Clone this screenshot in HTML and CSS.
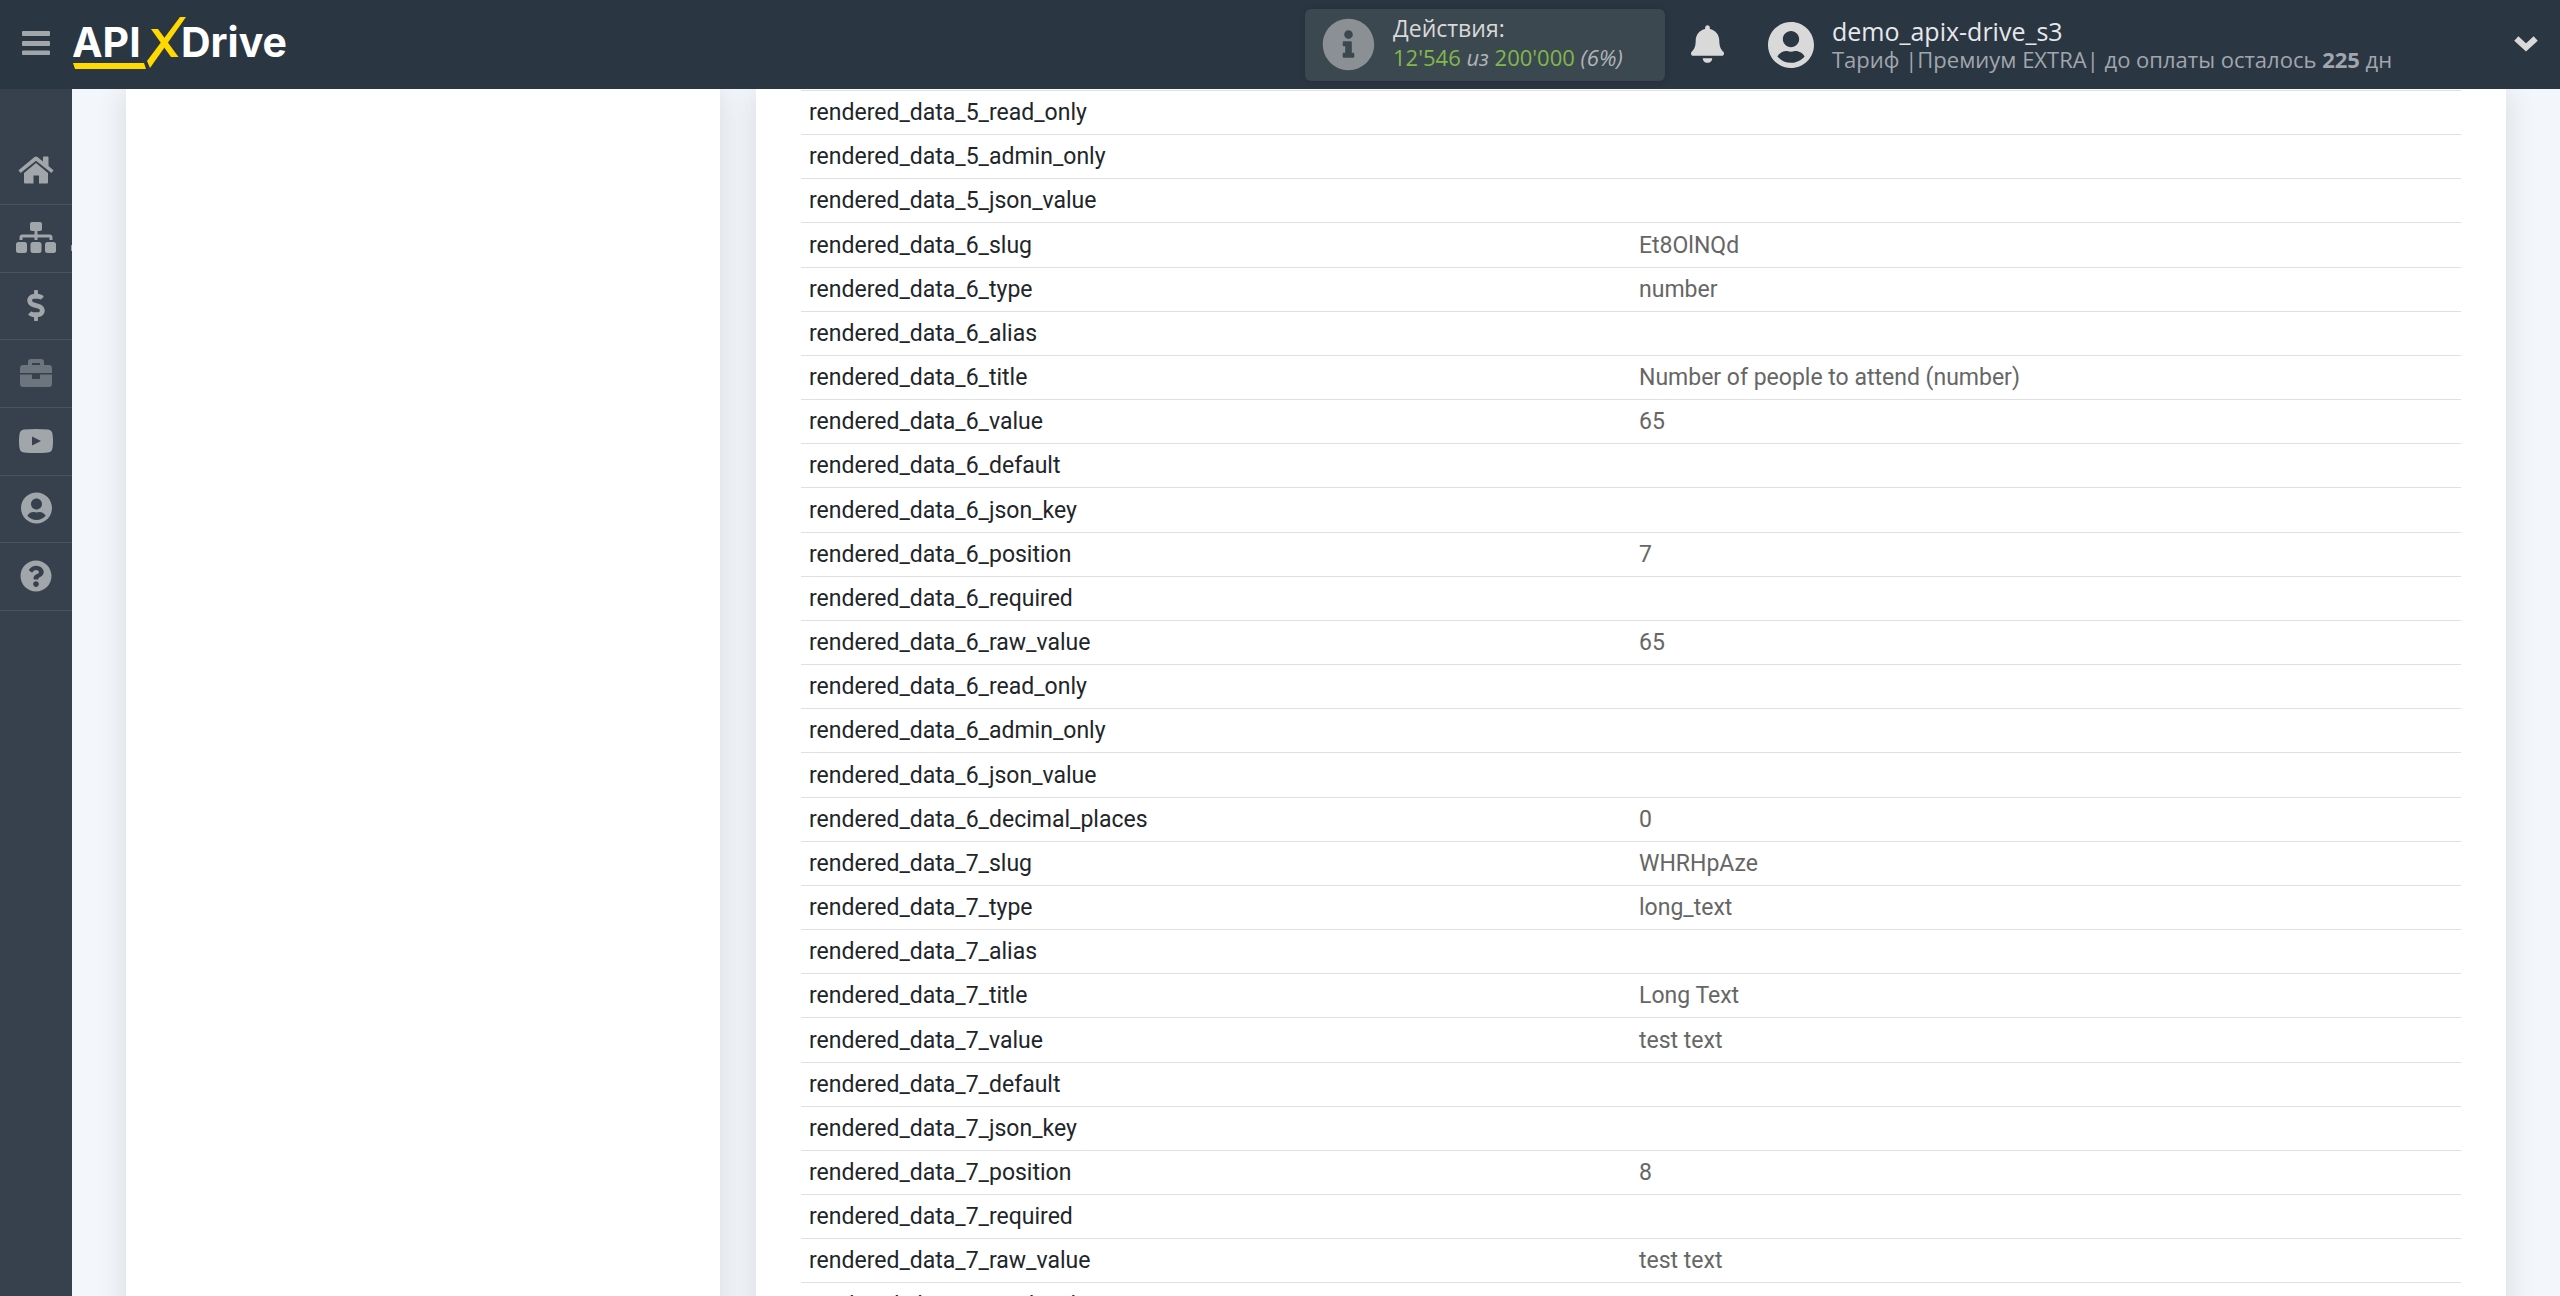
FILE: index.html
```html
<!DOCTYPE html>
<html lang="ru">
<head>
<meta charset="utf-8">
<title>ApiX-Drive</title>
<link rel="stylesheet" href="styles.css">
</head>
<body>
<header class="topbar">
  <button class="icon-button menu-toggle" type="button" aria-label="Меню">
    <svg width="28" height="24" viewBox="0 0 28 24"><g fill="currentColor"><rect width="28" height="5" rx="1"/><rect y="10" width="28" height="5" rx="1"/><rect y="19.500" width="28" height="4.500" rx="1"/></g></svg>
  </button>
  <a class="logo" href="#" aria-label="ApiX-Drive">
    <svg width="222" height="56" viewBox="0 0 222 56">
      <text class="logo-text" x="-1" y="42">API</text>
      <text class="logo-text" x="108" y="42">Drive</text>
      <g fill="#ffd900"><path d="M0 48H71L73 54H2Z"/><path d="M107 2H113L77 53L74 46Z"/><path d="M78 14H85L105.500 42H98Z"/></g>
    </svg>
  </a>
  <div class="usage">
    <svg class="usage-icon" viewBox="0 0 512 512"><path fill="currentColor" d="M256 8C119.043 8 8 119.083 8 256c0 136.997 111.043 248 248 248s248-111.003 248-248C504 119.083 392.957 8 256 8zm0 110c23.196 0 42 18.804 42 42s-18.804 42-42 42-42-18.804-42-42 18.804-42 42-42zm56 254c0 6.627-5.373 12-12 12h-88c-6.627 0-12-5.373-12-12v-24c0-6.627 5.373-12 12-12h12v-64h-12c-6.627 0-12-5.373-12-12v-24c0-6.627 5.373-12 12-12h64c6.627 0 12 5.373 12 12v100h12c6.627 0 12 5.373 12 12v24z"/></svg>
    <div class="usage-text">
      <div class="usage-label">Действия:</div>
      <div class="usage-count"><span class="count">12'546</span> <i>из</i> <span class="count">200'000</span> <i>(6%)</i></div>
    </div>
  </div>
  <button class="icon-button bell" type="button" aria-label="Уведомления">
    <svg width="33" height="38" viewBox="0 0 448 512"><path fill="currentColor" d="M224 512c35.320 0 63.970-28.650 63.970-64H160.030c0 35.350 28.650 64 63.970 64zm215.390-149.710c-19.320-20.760-55.470-51.990-55.470-154.290 0-77.700-54.480-139.900-127.940-155.160V32c0-17.670-14.320-32-31.980-32s-31.980 14.330-31.980 32v20.840C118.560 68.100 64.080 130.300 64.080 208c0 102.300-36.150 133.530-55.470 154.290-6 6.450-8.660 14.160-8.610 21.710.11 16.400 12.980 32 32.100 32h383.800c19.120 0 32-15.600 32.100-32 .05-7.550-2.610-15.270-8.610-21.710z"/></svg>
  </button>
  <a class="account" href="#">
    <svg class="account-icon" viewBox="0 0 496 512"><path fill="currentColor" d="M248 8C111 8 0 119 0 256s111 248 248 248 248-111 248-248S385 8 248 8zm0 96c48.600 0 88 39.400 88 88s-39.400 88-88 88-88-39.400-88-88 39.400-88 88-88zm0 344c-58.700 0-111.300-26.600-146.500-68.200 18.800-35.400 55.600-59.800 98.500-59.800 2.400 0 4.800.4 7.100 1.100 13 4.200 26.600 6.900 40.900 6.900 14.300 0 28-2.700 40.900-6.900 2.300-.7 4.700-1.100 7.100-1.100 42.900 0 79.700 24.400 98.500 59.800C359.300 421.400 306.700 448 248 448z"/></svg>
    <span class="account-text">
      <span class="account-name">demo_apix-drive_s3</span>
      <span class="account-plan">Тариф |Премиум EXTRA| до оплаты осталось <b>225</b> дн</span>
    </span>
  </a>
  <button class="icon-button expand" type="button" aria-label="Развернуть">
    <svg width="24" height="16" viewBox="0 0 24 16"><path fill="none" stroke="currentColor" stroke-width="6" stroke-linecap="square" d="M4.500 4.500L12 11.500L19.500 4.500"/></svg>
  </button>
</header>
<div class="body">
  <nav class="sidebar">
    <a href="#" aria-label="Главная"><svg width="36" height="28" viewBox="0 0 36 28"><g fill="currentColor"><path d="M18 7L30 17V26.500Q30 27.500 29 27.500H21V19.500H15.500V27.500H7Q6 27.500 6 26.500V17Z"/><path d="M16.500 1Q18 0 19.500 1L25 5.500V1.500Q25 .5 26 .5H29.500Q30.500 .5 30.500 1.500V10L35.500 14.200L33.500 17L18 4.700L2.500 17L.5 14.200Z"/></g></svg></a>
    <a class="has-children" href="#" aria-label="Связи"><svg width="40" height="31" viewBox="0 0 40 31"><g fill="currentColor"><rect x="14" width="12" height="9" rx="2"/><rect x="0" y="20" width="11" height="11" rx="2.500"/><rect x="14.500" y="20" width="11" height="11" rx="2.500"/><rect x="29" y="20" width="11" height="11" rx="2.500"/></g><path d="M20 8V18M5 18V15.500Q5 14 6.500 14H33.500Q35 14 35 15.500V18" fill="none" stroke="currentColor" stroke-width="3"/></svg></a>
    <a href="#" aria-label="Оплата"><svg width="18" height="31" viewBox="0 0 288 512"><path fill="currentColor" d="M209.200 233.400l-108-31.600C88.700 198.200 80 186.500 80 173.500c0-16.300 13.200-29.500 29.500-29.500h66.300c12.200 0 24.200 3.700 34.200 10.500 6.100 4.100 14.300 3.100 19.500-2l34.800-34c7.100-6.900 6.100-18.400-1.800-24.500C238 74.800 207.400 64.100 176 64V16c0-8.800-7.200-16-16-16h-32c-8.800 0-16 7.200-16 16v48h-2.500C45.800 64-5.400 118.700.5 183.600c4.200 46.100 39.400 83.600 83.800 96.600l102.500 30c12.500 3.700 21.200 15.300 21.200 28.300 0 16.300-13.200 29.500-29.500 29.500h-66.300C100 368 88 364.300 78 357.500c-6.100-4.100-14.300-3.100-19.500 2l-34.800 34c-7.100 6.900-6.100 18.400 1.800 24.500 24.500 19.200 55.100 29.900 86.500 30v48c0 8.800 7.200 16 16 16h32c8.800 0 16-7.200 16-16v-48.200c46.600-.9 90.300-28.600 105.700-72.700 21.500-61.600-14.600-124.800-72.500-141.700z"/></svg></a>
    <a class="dimmed" href="#" aria-label="Проекты"><svg width="32" height="28" viewBox="0 0 32 28"><g fill="currentColor"><path fill-rule="evenodd" d="M8 6V3Q8 0 11 0H21Q24 0 24 3V6H29Q32 6 32 9V14H0V9Q0 6 3 6ZM12 6H20V4H12Z"/><path d="M0 15.500H12V20H20V15.500H32V25Q32 28 29 28H3Q0 28 0 25Z"/></g></svg></a>
    <a href="#" aria-label="Видео"><svg width="34" height="24" viewBox="0 0 34 24"><path fill="currentColor" fill-rule="evenodd" d="M5 .5Q17 -.5 29 .5Q33 1 33.500 5Q34.500 12 33.500 19Q33 23 29 23.500Q17 24.500 5 23.500Q1 23 .5 19Q-.5 12 .5 5Q1 1 5 .5ZM13 7.500V16.500L22 12Z"/></svg></a>
    <a href="#" aria-label="Аккаунт"><svg width="31" height="32" viewBox="0 0 496 512"><path fill="currentColor" d="M248 8C111 8 0 119 0 256s111 248 248 248 248-111 248-248S385 8 248 8zm0 96c48.600 0 88 39.400 88 88s-39.400 88-88 88-88-39.400-88-88 39.400-88 88-88zm0 344c-58.700 0-111.300-26.600-146.500-68.200 18.800-35.400 55.600-59.800 98.500-59.800 2.400 0 4.800.4 7.100 1.100 13 4.200 26.600 6.900 40.900 6.900 14.300 0 28-2.700 40.900-6.900 2.300-.7 4.700-1.100 7.100-1.100 42.900 0 79.700 24.400 98.500 59.800C359.300 421.400 306.700 448 248 448z"/></svg></a>
    <a href="#" aria-label="Помощь"><svg width="32" height="32" viewBox="0 0 512 512"><path fill="currentColor" d="M504 256c0 136.997-111.043 248-248 248S8 392.997 8 256C8 119.083 119.043 8 256 8s248 111.083 248 248zM262.655 90c-54.497 0-89.255 22.957-116.549 63.758-3.536 5.286-2.353 12.415 2.715 16.258l34.699 26.310c5.205 3.947 12.621 3.008 16.665-2.122 17.864-22.658 30.113-35.797 57.303-35.797 20.429 0 45.698 13.148 45.698 32.958 0 14.976-12.363 22.667-32.534 33.976C247.128 238.528 216 254.941 216 296v4c0 6.627 5.373 12 12 12h56c6.627 0 12-5.373 12-12v-1.333c0-28.462 83.186-29.647 83.186-106.667 0-58.002-60.165-102-116.531-102zM256 338c-25.365 0-46 20.635-46 46 0 25.364 20.635 46 46 46s46-20.636 46-46c0-25.365-20.635-46-46-46z"/></svg></a>
  </nav>
  <main class="content">
    <section class="card"></section>
    <section class="card card-data">
      <table class="data">
        <tbody>
          <tr><td>rendered_data_5_read_only</td><td></td></tr>
          <tr><td>rendered_data_5_admin_only</td><td></td></tr>
          <tr><td>rendered_data_5_json_value</td><td></td></tr>
          <tr><td>rendered_data_6_slug</td><td>Et8OlNQd</td></tr>
          <tr><td>rendered_data_6_type</td><td>number</td></tr>
          <tr><td>rendered_data_6_alias</td><td></td></tr>
          <tr><td>rendered_data_6_title</td><td>Number of people to attend (number)</td></tr>
          <tr><td>rendered_data_6_value</td><td>65</td></tr>
          <tr><td>rendered_data_6_default</td><td></td></tr>
          <tr><td>rendered_data_6_json_key</td><td></td></tr>
          <tr><td>rendered_data_6_position</td><td>7</td></tr>
          <tr><td>rendered_data_6_required</td><td></td></tr>
          <tr><td>rendered_data_6_raw_value</td><td>65</td></tr>
          <tr><td>rendered_data_6_read_only</td><td></td></tr>
          <tr><td>rendered_data_6_admin_only</td><td></td></tr>
          <tr><td>rendered_data_6_json_value</td><td></td></tr>
          <tr><td>rendered_data_6_decimal_places</td><td>0</td></tr>
          <tr><td>rendered_data_7_slug</td><td>WHRHpAze</td></tr>
          <tr><td>rendered_data_7_type</td><td>long_text</td></tr>
          <tr><td>rendered_data_7_alias</td><td></td></tr>
          <tr><td>rendered_data_7_title</td><td>Long Text</td></tr>
          <tr><td>rendered_data_7_value</td><td>test text</td></tr>
          <tr><td>rendered_data_7_default</td><td></td></tr>
          <tr><td>rendered_data_7_json_key</td><td></td></tr>
          <tr><td>rendered_data_7_position</td><td>8</td></tr>
          <tr><td>rendered_data_7_required</td><td></td></tr>
          <tr><td>rendered_data_7_raw_value</td><td>test text</td></tr>
          <tr><td>rendered_data_7_read_only</td><td></td></tr>
        </tbody>
      </table>
    </section>
  </main>
</div>
</body>
</html>
```
FILE: styles.css
```css
* { box-sizing: border-box; }

body {
  margin: 0;
  height: 100vh;
  display: flex;
  flex-direction: column;
  overflow: hidden;
  background: #f3f6fb;
  font-family: "Open Sans", "Noto Sans", sans-serif;
}

svg { display: block; flex: none; }
a { color: inherit; text-decoration: none; }

.icon-button {
  padding: 0 0 2px;
  border: 0;
  background: none;
  color: #d9d9d9;
  cursor: pointer;
}

/* Top bar */
.topbar {
  display: flex;
  align-items: center;
  flex: none;
  height: 89px;
  padding-right: 22px;
  background: #2b3643;
}

.menu-toggle {
  display: flex;
  justify-content: center;
  width: 72px;
  padding-bottom: 4px;
  color: #a1a6aa;
}

.logo { margin: 0 auto 4px 1px; }

.logo-text {
  fill: #fff;
  font-family: Inter, sans-serif;
  font-size: 41px;
  font-weight: 700;
}

.usage {
  display: flex;
  align-items: center;
  gap: 18px;
  width: 360px;
  height: 72px;
  padding-left: 17px;
  border-radius: 6px;
  background: #3c4850;
  box-shadow: 0 0 6px rgba(0, 0, 0, .15);
}

.usage-icon { width: 53px; height: 53px; color: #8a9093; }
.usage-text { padding-bottom: 4px; line-height: 29px; }
.usage-label { color: #d9d9d9; font-size: 23px; }
.usage-count { color: #b0b4b7; font-size: 22px; }
.count { color: #82b74b; }

.bell { margin-left: 26px; }

.account {
  display: flex;
  align-items: center;
  gap: 18px;
  width: 746px;
  margin-left: 44px;
}

.account-icon { width: 46px; height: 48px; }
.account { color: #d9d9d9; }
.account-text { display: flex; flex-direction: column; line-height: 28px; }
.account-name { color: #e6e8ea; font-size: 25px; }
.account-plan { color: #a1a6ad; font-size: 22px; }

/* Side navigation */
.body { display: flex; flex: 1; min-height: 0; }

.sidebar {
  flex: none;
  width: 72px;
  padding-top: 48px;
  background: #36414d;
  color: #a1a6aa;
}

.sidebar a {
  position: relative;
  display: flex;
  align-items: center;
  justify-content: center;
  height: 68px;
  padding-bottom: 2px;
  border-bottom: 1px solid #4a545f;
}

.sidebar a:nth-child(3n) { height: 67px; }
.sidebar .dimmed { color: #6c747d; }

.has-children::after {
  content: "";
  position: absolute;
  right: 0;
  bottom: 21px;
  width: 1px;
  height: 6px;
  background: #a1a6aa;
}

/* Content */
.content {
  display: grid;
  grid-template-columns: 594fr 1750fr;
  gap: 36px;
  flex: 1;
  min-width: 0;
  padding: 0 54px;
  overflow: hidden;
}

.card { background: #fff; box-shadow: 0 0 30px rgba(0, 0, 0, .12); }
.card-data { padding: 1px 45px 0; }

.data {
  width: 100%;
  table-layout: fixed;
  border-spacing: 0;
  font-family: Roboto, sans-serif;
  font-size: 23px;
  line-height: 28px;
}

.data td {
  padding: 8px 8px 7px;
  border-top: 1px solid #dee0e2;
  color: #212529;
}

.data td + td { color: #666; }
.data tr:nth-child(6n + 4) td { padding-top: 9px; }
```
